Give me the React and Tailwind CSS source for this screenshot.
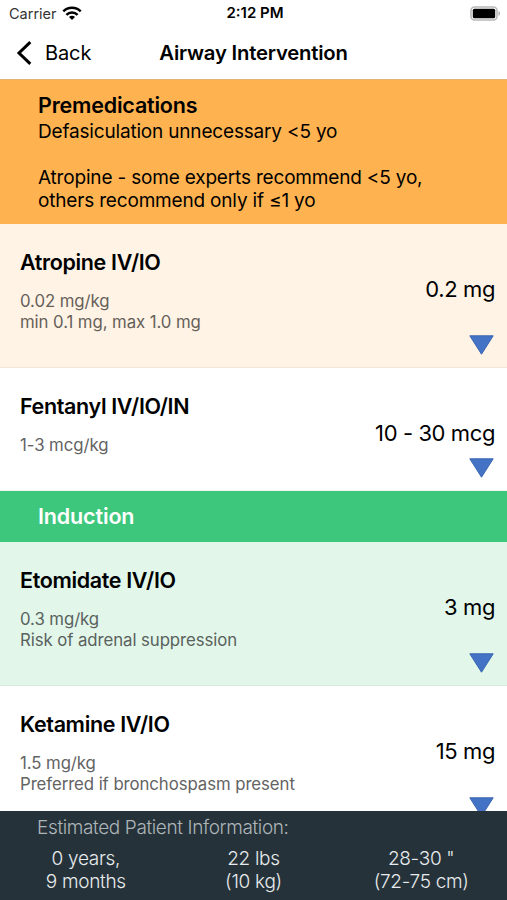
const sections = [
  {
    title: 'Premedications',
    notes: true,
    drugs: [
      { name: 'Atropine IV/IO', dose: '0.2 mg', lines: ['0.02 mg/kg', 'min 0.1 mg, max 1.0 mg'], className: 'h-36 bg-[#fff3e5] text-[#655f59]' },
      { name: 'Fentanyl IV/IO/IN', dose: '10 - 30 mcg', lines: ['1-3 mcg/kg'], className: 'h-[123px] bg-white text-[#636363]' },
    ],
  },
  {
    title: 'Induction',
    drugs: [
      { name: 'Etomidate IV/IO', dose: '3 mg', lines: ['0.3 mg/kg', 'Risk of adrenal suppression'], className: 'h-36 bg-[#e2f6ea] text-[#59625d]' },
      { name: 'Ketamine IV/IO', dose: '15 mg', lines: ['1.5 mg/kg', 'Preferred if bronchospasm present'], className: 'h-36 bg-white text-[#636363]' },
    ],
  },
]

const patient = [
  ['0 years,', '9 months'],
  ['22 lbs', '(10 kg)'],
  ['28-30 "', '(72-75 cm)'],
]

function StatusBar() {
  return (
    <div className="grid h-[27px] shrink-0 grid-cols-3 items-center pl-[9px] pr-[6px] text-[14.5px]">
      <div className="flex items-center gap-[5px] text-[#333]">
        <span>Carrier</span>
        <svg className="-mt-0.5" width="20" height="14" viewBox="0 0 20 14" fill="none" stroke="#000" strokeWidth="2.5">
          <path d="M1.3 5.4a12.2 12.2 0 0 1 17.4 0" />
          <path d="M4.4 8.8a7.9 7.9 0 0 1 11.2 0" />
          <path d="M10 14 7 11a4.2 4.2 0 0 1 6 0Z" fill="#000" stroke="none" />
        </svg>
      </div>
      <div className="whitespace-nowrap text-center text-[15px] font-semibold">2:12 PM</div>
      <svg className="justify-self-end" width="31" height="15" viewBox="0 0 31 15">
        <rect x="1" y="1" width="26" height="13" rx="3.5" fill="#fff" stroke="#b8b8b8" strokeWidth="1.6" />
        <rect x="2.8" y="2.8" width="22.4" height="9.4" rx="1.5" />
        <path d="M28.5 5c2 .7 2 4.3 0 5Z" fill="#b0b0b0" />
      </svg>
    </div>
  )
}

function Drug({ drug }) {
  return (
    <div className={`flex shrink-0 justify-between border-b border-black/5 pl-5 pr-3 ${drug.className}`}>
      <div className="pt-[23.5px]">
        <h3 className="text-[21.5px] font-semibold leading-7 tracking-[-0.35px] text-black">{drug.name}</h3>
        <div className="mt-[15.5px] text-[16.8px] leading-[20.5px] tracking-[-0.08px]">
          {drug.lines.map(l => <p key={l}>{l}</p>)}
        </div>
      </div>
      <div className="flex flex-col items-end justify-between pb-3 pt-[50.5px] text-black">
        <p className="text-[22px] leading-7 tracking-[-0.4px]">{drug.dose}</p>
        <svg className="mr-px" width="25" height="20" viewBox="0 0 25 20">
          <path d="M.8.8h23.4L12.5 19.2Z" fill="#4472c4" stroke="#3b66b2" />
        </svg>
      </div>
    </div>
  )
}

export default function App() {
  return (
    <div className="flex h-[900px] w-[507px] flex-col overflow-hidden bg-white font-['Inter',sans-serif] text-black">
      <StatusBar />
      <header className="grid h-[52px] shrink-0 grid-cols-[1fr_auto_1fr] items-center text-xl">
        <button className="flex items-center gap-[13px] pl-4 tracking-[-0.1px]">
          <svg width="16" height="24" viewBox="0 0 16 24" fill="none" stroke="#000" strokeWidth="3">
            <path d="M14.3 1.2 3 12l11.3 10.8" />
          </svg>
          Back
        </button>
        <h1 className="text-[20.3px] font-semibold tracking-[-0.2px]">Airway Intervention</h1>
      </header>
      <main className="flex min-h-0 flex-1 flex-col overflow-hidden">
        {sections.map(s => (
          <section key={s.title} className="shrink-0">
            {s.notes ? (
              <div className="h-[145px] border-t border-[#e2b473] bg-[#ffb350] pl-[38px] pt-3 text-[19px] leading-[23px] tracking-[-0.18px]">
                <h2 className="mb-px text-[21.5px] font-semibold leading-[27px] tracking-[-0.2px]">{s.title}</h2>
                <p>Defasiculation unnecessary &lt;5 yo</p>
                <p className="mt-[23px]">Atropine - some experts recommend &lt;5 yo,</p>
                <p>others recommend only if ≤1 yo</p>
              </div>
            ) : (
              <h2 className="flex h-[51px] items-center bg-[#3dc77d] pl-[38px] text-[21.5px] font-semibold tracking-[-0.15px] text-white">{s.title}</h2>
            )}
            {s.drugs.map(d => <Drug key={d.name} drug={d} />)}
          </section>
        ))}
      </main>
      <footer className="h-[89px] shrink-0 bg-[#25323a] pt-[5px] text-[19px] font-light leading-[23px] tracking-[-0.3px] text-[#e8ebec]">
        <p className="pl-[37px] tracking-[-0.37px] text-[#aeb5b8]">Estimated Patient Information:</p>
        <div className="mt-2 grid grid-cols-3 px-[2px] text-center">
          {patient.map(([a, b]) => (
            <div key={a}>
              <p>{a}</p>
              <p>{b}</p>
            </div>
          ))}
        </div>
      </footer>
    </div>
  )
}
